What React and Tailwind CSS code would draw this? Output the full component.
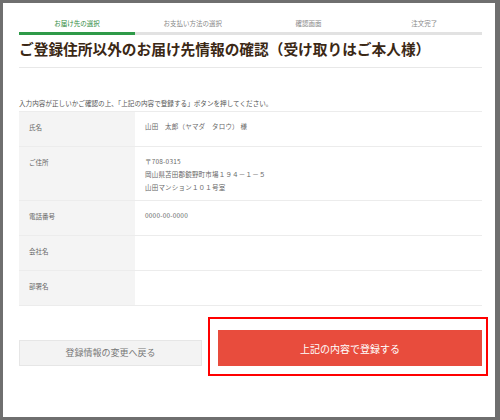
const steps = ["お届け先の選択", "お支払い方法の選択", "確認画面", "注文完了"];

const rows = [
  { label: "氏名", lines: ["山田　太郎（ヤマダ　タロウ） 様"], h: "h-[35px]" },
  {
    label: "ご住所",
    lines: ["〒708-0315", "岡山県苫田郡鏡野町市場１９４－１－５", "山田マンション１０１号室"],
    h: "h-[54px]",
  },
  { label: "電話番号", lines: ["0000-00-0000"], h: "h-[35px]" },
  { label: "会社名", lines: [], h: "h-[35px]" },
  { label: "部署名", lines: [], h: "h-[35px]" },
];

function StepTabs() {
  return (
    <div className="grid grid-cols-4">
      {steps.map((step, i) => (
        <div
          key={step}
          className={
            i === 0
              ? "pt-[15px] pb-[4px] text-center text-[6.5px] leading-[10px] text-[#2e8b3e] border-b-[3px] border-[#2e9a48]"
              : "pt-[15px] pb-[4px] text-center text-[6.5px] leading-[10px] text-[#888888] border-b-[3px] border-[#e2e2e2]"
          }
        >
          {step}
        </div>
      ))}
    </div>
  );
}

export default function App() {
  return (
    <div
      className="w-[500px] h-[420px] bg-white border-t-[3px] border-l-[3px] border-r-[5px] border-b-[3px] border-[#6f6f6f] pl-[16px] pr-[13px] overflow-hidden"
      style={{ fontFamily: '"Noto Sans CJK JP", "Noto Sans", sans-serif' }}
    >
      <StepTabs />

      <h1 className="mt-[4px] pb-[8px] text-[14.7px] leading-[20px] font-bold text-[#3b2815] border-b border-[#e8e8e8] whitespace-nowrap">
        ご登録住所以外のお届け先情報の確認（受け取りはご本人様）
      </h1>

      <p className="mt-[30px] text-[6.6px] leading-[10px] text-[#555555] whitespace-nowrap">
        入力内容が正しいかご確認の上、「上記の内容で登録する」ボタンを押してください。
      </p>

      <div className="mt-[3px] border-t border-[#ececec]">
        {rows.map((row) => (
          <div key={row.label} className={`flex border-b border-[#ececec] ${row.h}`}>
            <div className="w-[116px] bg-[#f4f4f4] pl-[10px] pt-[9px] text-[6.5px] leading-[13px] text-[#666666]">
              {row.label}
            </div>
            <div className="flex-1 pl-[10px] pt-[8px] text-[6.5px] leading-[13px] text-[#666666]">
              {row.lines.map((line) => (
                <div key={line} className="tracking-[0.2px]">{line}</div>
              ))}
            </div>
          </div>
        ))}
      </div>

      <div className="mt-[24px] flex items-end gap-[16px]">
        <button className="w-[183px] h-[26px] bg-[#f3f3f3] border border-[#e6e6e6] text-[9px] text-[#777777]">
          登録情報の変更へ戻る
        </button>
        <div className="relative flex-1">
          <button className="w-full h-[36px] bg-[#e84c3d] text-[10px] text-white">
            上記の内容で登録する
          </button>
          <div className="absolute left-[-10px] top-[-13px] right-[-6px] bottom-[-10px] border-2 border-[#ff0000] pointer-events-none" />
        </div>
      </div>
    </div>
  );
}
